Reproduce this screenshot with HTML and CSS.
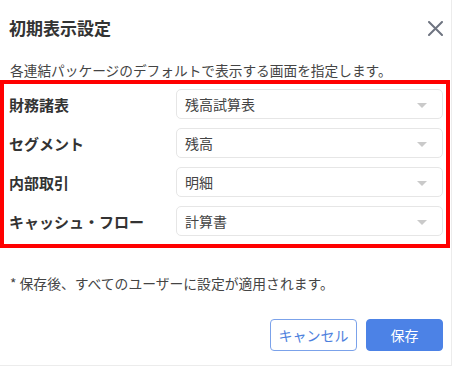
FILE: index.html
```html
<!DOCTYPE html>
<html lang="ja">
<head>
  <meta charset="UTF-8" />
  <meta name="viewport" content="width=device-width, initial-scale=1.0"/>
  <title>初期表示設定</title>
  <link rel="stylesheet" href="styles.css">
</head>
<body>
  <div class="dialog">
    <div class="dialog-header">
      <h1 class="dialog-title">初期表示設定</h1>
      <button class="close-btn" aria-label="閉じる">
        <svg width="15" height="15" viewBox="0 0 15 15">
          <path d="M1 1 L14 14 M14 1 L1 14" stroke="#6e7480" stroke-width="2" stroke-linecap="round"/>
        </svg>
      </button>
    </div>

    <p class="description">各連結パッケージのデフォルトで表示する画面を指定します。</p>

    <div class="settings">
      <div class="setting-row">
        <label class="setting-label">財務諸表</label>
        <div class="select">残高試算表<span class="caret"></span></div>
      </div>
      <div class="setting-row">
        <label class="setting-label">セグメント</label>
        <div class="select">残高<span class="caret"></span></div>
      </div>
      <div class="setting-row">
        <label class="setting-label">内部取引</label>
        <div class="select">明細<span class="caret"></span></div>
      </div>
      <div class="setting-row">
        <label class="setting-label">キャッシュ・フロー</label>
        <div class="select">計算書<span class="caret"></span></div>
      </div>
    </div>

    <p class="note">* 保存後、すべてのユーザーに設定が適用されます。</p>

    <div class="actions">
      <button class="btn btn-cancel">キャンセル</button>
      <button class="btn btn-save">保存</button>
    </div>
  </div>
</body>
</html>
```

FILE: styles.css
```css
* {
  box-sizing: border-box;
}
body {
  margin: 0;
  background: #fff;
  font-family: "Noto Sans CJK JP", "Noto Sans", sans-serif;
  color: #333;
}
.dialog {
  width: 452px;
  height: 366px;
  border: 1px solid #ececec;
  border-top: none;
  border-left: none;
  background: #fff;
}
.dialog-header {
  display: flex;
  justify-content: space-between;
  align-items: center;
  padding: 16px 8px 0 9px;
}
.dialog-title {
  margin: 0;
  font-size: 17px;
  line-height: 24px;
  font-weight: bold;
  color: #333;
}
.close-btn {
  border: none;
  background: none;
  padding: 0;
  width: 15px;
  height: 15px;
  cursor: pointer;
}
.close-btn svg {
  display: block;
}
.description {
  margin: 20px 0 0 10px;
  font-size: 13.7px;
  line-height: 20px;
  color: #444;
}
.settings {
  width: 450px;
  border: 4px solid #f00;
  padding: 5px 3px 8px 5px;
  display: flex;
  flex-direction: column;
  gap: 9px;
}
.setting-row {
  display: grid;
  grid-template-columns: 167px 1fr;
  align-items: center;
}
.setting-label {
  font-size: 15px;
  font-weight: bold;
  color: #333;
}
.select {
  position: relative;
  height: 30px;
  border: 1px solid #e6e6e6;
  border-radius: 5px;
  padding: 0 8px;
  font-size: 14px;
  line-height: 28px;
  color: #444;
}
.caret {
  position: absolute;
  right: 15px;
  top: 13px;
  width: 0;
  height: 0;
  border-left: 5px solid transparent;
  border-right: 5px solid transparent;
  border-top: 5px solid #cacaca;
}
.note {
  margin: 25px 0 0 10px;
  font-size: 13.8px;
  line-height: 20px;
  color: #444;
}
.actions {
  display: flex;
  justify-content: flex-end;
  gap: 9px;
  margin-top: 26px;
  padding-right: 8px;
}
.btn {
  height: 32px;
  border-radius: 4px;
  font-family: inherit;
  font-size: 14px;
  cursor: pointer;
}
.btn-cancel {
  width: 87px;
  background: #fff;
  border: 1px solid #7ba2ea;
  color: #4d7fdd;
}
.btn-save {
  width: 77px;
  background: #4c82e6;
  border: 1px solid #4c82e6;
  color: #fff;
}
```
